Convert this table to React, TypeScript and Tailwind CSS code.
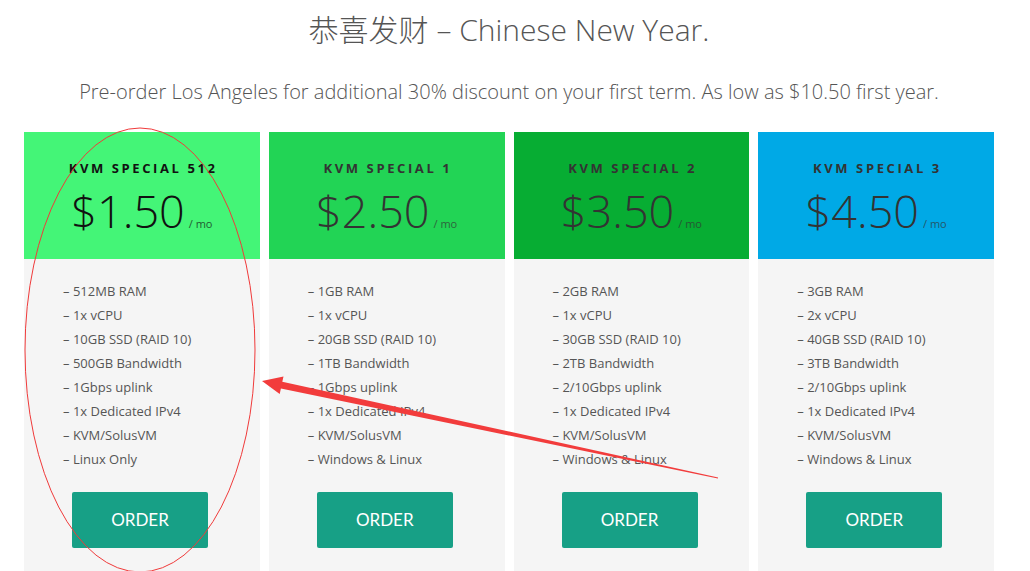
import React from "react";

const plans = [
  {
    name: "KVM SPECIAL 512",
    price: "$1.50",
    bg: "bg-[#44f577]",
    ink: "text-[#111]",
    features: ["512MB RAM", "1x vCPU", "10GB SSD (RAID 10)", "500GB Bandwidth", "1Gbps uplink", "1x Dedicated IPv4", "KVM/SolusVM", "Linux Only"],
  },
  {
    name: "KVM SPECIAL 1",
    price: "$2.50",
    bg: "bg-[#22d455]",
    ink: "text-[#333]",
    features: ["1GB RAM", "1x vCPU", "20GB SSD (RAID 10)", "1TB Bandwidth", "1Gbps uplink", "1x Dedicated IPv4", "KVM/SolusVM", "Windows & Linux"],
  },
  {
    name: "KVM SPECIAL 2",
    price: "$3.50",
    bg: "bg-[#07ad33]",
    ink: "text-[#333]",
    features: ["2GB RAM", "1x vCPU", "30GB SSD (RAID 10)", "2TB Bandwidth", "2/10Gbps uplink", "1x Dedicated IPv4", "KVM/SolusVM", "Windows & Linux"],
  },
  {
    name: "KVM SPECIAL 3",
    price: "$4.50",
    bg: "bg-[#00a9e6]",
    ink: "text-[#333]",
    features: ["3GB RAM", "2x vCPU", "40GB SSD (RAID 10)", "3TB Bandwidth", "2/10Gbps uplink", "1x Dedicated IPv4", "KVM/SolusVM", "Windows & Linux"],
  },
];

export default function App() {
  return (
    <div className="relative w-[1030px] h-[571px] overflow-hidden bg-white font-['Open_Sans','Noto_Sans_CJK_SC',sans-serif] text-[#555]">
      <div className="w-[970px] ml-[24px]">
        <h1 className="pt-[10px] text-center text-[30px] leading-[40px] font-light text-[#555]">
          恭喜发财 – Chinese New Year.
        </h1>
        <p className="mt-[28px] text-center text-[20px] leading-[28px] font-light text-[#555]">
          Pre-order Los Angeles for additional 30% discount on your first term. As low as $10.50 first year.
        </p>

        <div className="mt-[26px] grid grid-cols-4 gap-[9px]">
          {plans.map((p) => (
            <div key={p.name} className="flex flex-col">
              <div className={`${p.bg} ${p.ink} h-[127px] flex flex-col items-center pt-[26px]`}>
                <p className="text-[13px] leading-[20px] font-bold tracking-[0.2em] pl-[0.2em]">{p.name}</p>
                <div className="mt-[5px] flex items-baseline">
                  <span className="text-[45px] leading-[56px] font-light">{p.price}</span>
                  <span className="ml-[4px] text-[11px] opacity-70">/ mo</span>
                </div>
              </div>
              <div className="bg-[#f5f5f5] h-[330px] pt-[20px] pl-[39px]">
                <ul className="text-[13px] leading-[24px] text-[#555]">
                  {p.features.map((f) => (
                    <li key={f}>– {f}</li>
                  ))}
                </ul>
                <button className="mt-[21px] ml-[9px] w-[136px] h-[56px] rounded-[2px] bg-[#17a086] text-white text-[17px] font-['Lato',sans-serif]">
                  ORDER
                </button>
              </div>
            </div>
          ))}
        </div>
      </div>

      {/* annotation drawn on top of the screenshot */}
      <svg className="absolute left-0 top-0 pointer-events-none" width="1030" height="571">
        <ellipse cx="140" cy="350" rx="115" ry="222" fill="none" stroke="#f03a3a" strokeWidth="1" />
        <polygon
          points="262,381 283.5,376.4 282.3,381.8 718.1,477.5 717.9,478.5 280.9,388.6 279.7,394"
          fill="#f23c3c"
        />
      </svg>
    </div>
  );
}
